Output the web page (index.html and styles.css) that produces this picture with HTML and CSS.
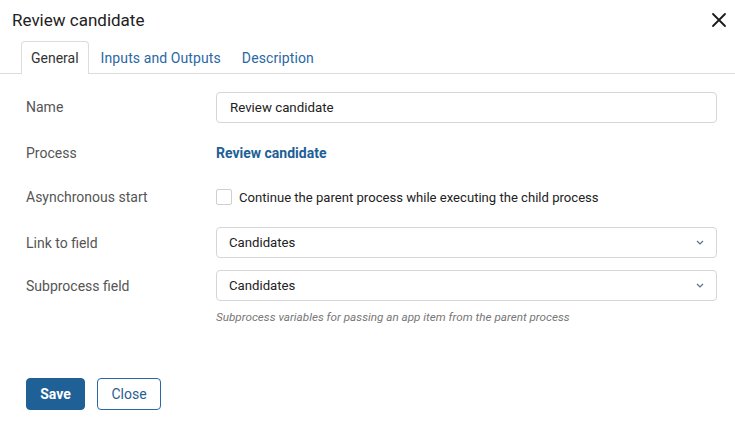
FILE: index.html
```html
<!DOCTYPE html>
<html lang="en">
<head>
<meta charset="utf-8">
<title>Review candidate</title>
<link rel="stylesheet" href="styles.css">
</head>
<body>
<div class="dialog">
  <div class="header">
    <div class="title">Review candidate</div>
    <button class="close-x" aria-label="Close">
      <svg width="16" height="16" viewBox="0 0 16 16"><path d="M2 2 L14 14 M14 2 L2 14" stroke="#1a1a1a" stroke-width="1.8" fill="none" stroke-linecap="round"/></svg>
    </button>
  </div>
  <div class="tabs">
    <div class="tab active">General</div>
    <div class="tab">Inputs and Outputs</div>
    <div class="tab">Description</div>
  </div>
  <div class="form">
    <div class="row row-name">
      <div class="label">Name</div>
      <div class="control"><div class="input">Review candidate</div></div>
    </div>
    <div class="row row-process">
      <div class="label">Process</div>
      <div class="control"><a class="link">Review candidate</a></div>
    </div>
    <div class="row row-async">
      <div class="label">Asynchronous start</div>
      <div class="control check-line"><span class="checkbox"></span><span class="check-text">Continue the parent process while executing the child process</span></div>
    </div>
    <div class="row row-link">
      <div class="label">Link to field</div>
      <div class="control"><div class="input select"><span>Candidates</span><svg class="chev" width="8" height="5" viewBox="0 0 8 5"><path d="M1 1 L4 4 L7 1" stroke="#5a6f8c" stroke-width="1.2" fill="none"/></svg></div></div>
    </div>
    <div class="row row-sub">
      <div class="label">Subprocess field</div>
      <div class="control">
        <div class="input select"><span>Candidates</span><svg class="chev" width="8" height="5" viewBox="0 0 8 5"><path d="M1 1 L4 4 L7 1" stroke="#5a6f8c" stroke-width="1.2" fill="none"/></svg></div>
        <div class="hint">Subprocess variables for passing an app item from the parent process</div>
      </div>
    </div>
  </div>
  <div class="footer">
    <button class="btn btn-primary">Save</button>
    <button class="btn btn-outline">Close</button>
  </div>
</div>
</body>
</html>
```
FILE: styles.css
```css
* { box-sizing: border-box; }
html, body { margin: 0; padding: 0; background: #fff; }
body {
  font-family: Roboto, "Liberation Sans", sans-serif;
  color: #333;
  width: 735px;
  height: 430px;
  overflow: hidden;
}
.header {
  height: 41px;
  display: flex;
  align-items: center;
  justify-content: space-between;
  padding: 0 7px 2px 12px;
}
.title { font-size: 17px; color: #222; }
.close-x {
  border: 0; background: none; padding: 0; width: 18px; height: 18px;
  display: flex; align-items: center; justify-content: center;
}
.tabs {
  display: flex;
  height: 33px;
  border-bottom: 1px solid #dcdcdc;
  padding-left: 21px;
}
.tab {
  font-size: 14px;
  color: #2a68a4;
  padding: 0 10px;
  line-height: 32px;
  border: 1px solid transparent;
  border-bottom: 0;
  margin-right: -1px;
  letter-spacing: 0.1px;
}
.tab.active {
  color: #333;
  border-color: #dcdcdc;
  border-radius: 4px 4px 0 0;
  background: #fff;
  height: 33px;
  padding: 0 9px;
  margin-right: 1px;
  letter-spacing: 0;
}
.form { padding: 18px 18px 0 26px; }
.row { display: flex; align-items: flex-start; }
.label { width: 190px; flex: none; font-size: 14px; color: #555; }
.control { flex: 1; font-size: 14px; }
.row-name .label { line-height: 31px; }
.row-process { margin-top: 20px; }
.row-process .label, .row-process .control { line-height: 20px; }
.row-async { margin-top: 24px; }
.row-async .label { line-height: 20px; }
.row-link { margin-top: 20px; }
.row-link .label { line-height: 31px; padding-top: 1px; }
.row-sub .label { line-height: 31px; padding-top: 1px; }
.row-sub { margin-top: 11px; }
.input {
  height: 31px;
  border: 1px solid #d6d6d6;
  border-radius: 4px;
  padding: 0 13px;
  display: flex;
  align-items: center;
  font-size: 13.3px;
  color: #222;
}
.select { justify-content: space-between; padding: 0 12px 0 12px; font-size: 13.2px; }
.chev { display: block; }
.link { color: #1d5f97; font-weight: 700; font-size: 14px; }
.check-line { display: flex; align-items: center; height: 20px; }
.checkbox {
  width: 16px; height: 16px;
  border: 1px solid #cfcfcf;
  border-radius: 2px;
  margin-right: 7px;
  flex: none;
}
.check-text { color: #222; font-size: 13.1px; }
.hint {
  margin-top: 9px;
  font-size: 11.7px;
  font-style: italic;
  color: #777;
  line-height: 14px;
}
.footer {
  display: flex;
  gap: 12px;
  padding: 54px 0 0 26px;
}
.btn {
  height: 32px;
  font-family: Roboto, "Liberation Sans", sans-serif;
  font-size: 14px;
  border-radius: 4px;
  padding: 0;
}
.btn-primary {
  width: 59px;
  background: #1f6196;
  border: 1px solid #1f6196;
  color: #fff;
  font-weight: 700;
}
.btn-outline {
  width: 64px;
  background: #fff;
  border: 1px solid #2a68a4;
  color: #2a5e90;
}
```
